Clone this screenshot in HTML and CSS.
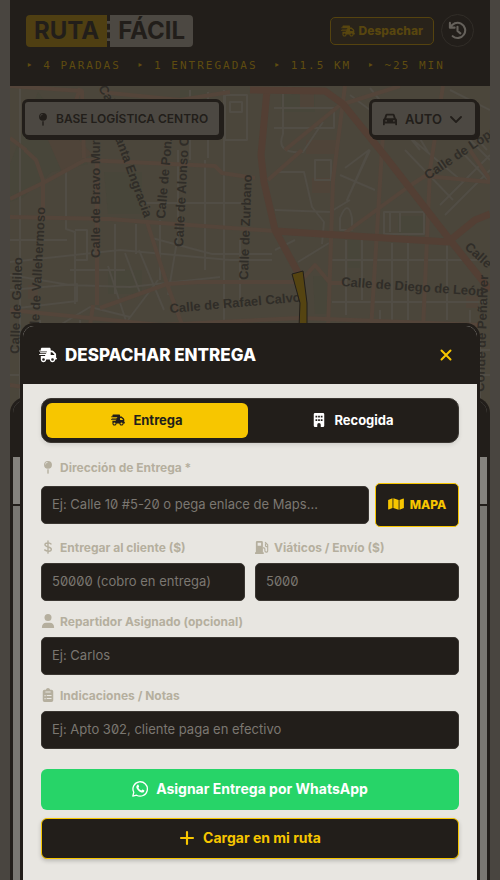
FILE: index.html
```
<!DOCTYPE html>
<html lang="es">
<head>
    <meta charset="UTF-8">
    <meta name="viewport" content="width=device-width, initial-scale=1.0">
    <title>Ruta Fácil</title>
    <link rel="stylesheet" href="styles.css">
</head>
<body>
    <!-- Shared icons -->
    <svg class="sprite" aria-hidden="true">
        <symbol id="i-truck" viewBox="0 0 640 512"><path fill-rule="evenodd" d="M112 0C85.5 0 64 21.5 64 48V96H16c-8.8 0-16 7.2-16 16s7.2 16 16 16H64 272c8.8 0 16 7.2 16 16s-7.2 16-16 16H48c-8.8 0-16 7.2-16 16s7.2 16 16 16H240c8.8 0 16 7.2 16 16s-7.2 16-16 16H16c-8.8 0-16 7.2-16 16s7.2 16 16 16H208c8.8 0 16 7.2 16 16s-7.2 16-16 16H64V416c0 53 43 96 96 96s96-43 96-96H384c0 53 43 96 96 96s96-43 96-96h32c17.700 0 32-14.300 32-32s-14.300-32-32-32V237.300c0-17-6.700-33.300-18.700-45.300L512 114.700c-12-12-28.300-18.700-45.300-18.700H416V48c0-26.500-21.500-48-48-48H112zM544 237.300V256H416V160h50.700L544 237.300zM160 368a48 48 0 1 1 0 96 48 48 0 1 1 0-96zm272 48a48 48 0 1 1 96 0 48 48 0 1 1 -96 0z"/></symbol>
        <symbol id="i-pin" viewBox="0 0 16 16"><path fill-rule="evenodd" d="M8 1a4.500 4.500 0 1 0 0 9a4.500 4.500 0 0 0 0-9zM7.500 3a2 2 0 0 0-2 2H4.800A2.700 2.700 0 0 1 7.500 2.300z"/><path d="M7.200 10.500h1.600V15L8 16l-.8-1z"/></symbol>
        <symbol id="i-building" viewBox="0 0 16 16"><path fill-rule="evenodd" d="M3.500 0h9A1.500 1.500 0 0 1 14 1.500v13a1.500 1.500 0 0 1-1.500 1.500H10v-2.500a2 2 0 0 0-4 0V16H3.500A1.500 1.500 0 0 1 2 14.500v-13A1.500 1.500 0 0 1 3.500 0zM4 3v2h2V3zm3 0v2h2V3zm3 0v2h2V3zM4 7v2h2V7zm3 0v2h2V7zm3 0v2h2V7z"/></symbol>
        <symbol id="i-map" viewBox="0 0 18 16"><path d="M0 3.500 5 1.500v11L.7 14.300Q0 14.500 0 13.800zM6 1.500l6 2v11l-6-2zM13 3.500l4.300-1.800Q18 1.500 18 2.200v10.300l-5 2z"/></symbol>
        <symbol id="i-dollar" viewBox="0 0 16 16"><path fill="none" stroke="currentColor" stroke-width="1.600" stroke-linecap="round" d="M8 1v14M11.500 4.500C9.500 2.900 4.500 2.700 4.500 5.500S11.800 7.600 11.800 10.500 6.500 13.400 4.200 11.300"/></symbol>
        <symbol id="i-fuel" viewBox="0 0 16 16"><path fill-rule="evenodd" d="M2.500 1h5A1.500 1.500 0 0 1 9 2.500V14h1v2H0v-2h1V2.500A1.500 1.500 0 0 1 2.500 1zM3 3v3.500h4V3z"/><path fill="none" stroke="currentColor" stroke-width="1.300" d="M9 9h1q1.300 0 1.300 1.300v2a1.500 1.500 0 0 0 3.200 0V5.500L11.500 2.500M12 4v2.500q0 1 1 1h1.500"/></symbol>
        <symbol id="i-user" viewBox="0 0 16 16"><circle cx="8" cy="4" r="4"/><path d="M1 15.500c0-3.500 2-5.500 5-5.500h4c3 0 5 2 5 5.500q0 .5-.5.500h-13Q1 16 1 15.500z"/></symbol>
        <symbol id="i-notes" viewBox="0 0 16 16"><path fill-rule="evenodd" d="M5.500 2a2.600 2.600 0 0 1 5 0h1.500a2 2 0 0 1 2 2v10a2 2 0 0 1-2 2H4a2 2 0 0 1-2-2V4a2 2 0 0 1 2-2zM5 4v1h6V4zM4 8v1.300h1.300V8zm2.500 0v1.200H12V8zM4 11.500v1.300h1.300v-1.300zm2.500 0v1.200H12v-1.200z"/></symbol>
        <symbol id="i-car" viewBox="0 0 16 16"><path fill-rule="evenodd" d="M4.500 2h7q1.400 0 1.900 1.400L14.600 7Q16 7.500 16 9v5.500q0 .5-.5.500h-1q-.5 0-.5-.5V13H2v1.500q0 .5-.5.500h-1q-.5 0-.5-.5V9Q0 7.500 1.400 7l1.200-3.600Q3.100 2 4.500 2zm.2 2L3.700 7h8.600l-1-3zM3.500 9a1 1 0 1 0 0 2 1 1 0 0 0 0-2zm9 0a1 1 0 1 0 0 2 1 1 0 0 0 0-2z"/></symbol>
        <symbol id="i-history" viewBox="0 0 20 20"><path fill="none" stroke="currentColor" stroke-width="2.200" stroke-linecap="round" stroke-linejoin="round" d="M2 2v5h5M2.600 7A8 8 0 1 1 5 16M10 6v4.500l3 2.500"/></symbol>
        <symbol id="i-chevron" viewBox="0 0 12 12"><path fill="none" stroke="currentColor" stroke-width="1.800" stroke-linecap="round" stroke-linejoin="round" d="M1 4l5 5 5-5"/></symbol>
        <symbol id="i-close" viewBox="0 0 12 12"><path fill="none" stroke="currentColor" stroke-width="2" stroke-linecap="round" d="M1.500 1.500l9 9M10.500 1.500l-9 9"/></symbol>
        <symbol id="i-plus" viewBox="0 0 12 12"><path fill="none" stroke="currentColor" stroke-width="1.600" stroke-linecap="round" d="M6 1.500v9M1.500 6h9"/></symbol>
        <symbol id="i-whatsapp" viewBox="0 0 16 16"><path fill="none" stroke="currentColor" stroke-width="1.300" stroke-linejoin="round" d="M.8 15.200l1-3.900A7.200 7.200 0 1 1 4.600 14.200z"/><path d="M5.300 3.900c.5-.5 1-.4 1.200.1l.6 1.500c.1.400-.6 1-.7 1.200.7 1.400 1.600 2.200 3 2.800.3-.1.800-1.100 1.200-.9l1.500.7c.5.300.2 1.300-.2 1.700-1 .9-2.300.7-3.700 0C6.500 10.100 5.300 8.700 4.600 7.200 4.100 6 4.300 4.700 5.300 3.900z"/></symbol>
    </svg>

    <div class="app">
        <header class="topbar">
            <div class="topbar-row">
                <h1 class="brand"><span class="brand-a">RUTA</span><span class="brand-b">FÁCIL</span></h1>
                <div class="topbar-actions">
                    <button type="button" class="btn-dispatch"><svg class="icon"><use href="#i-truck"/></svg>Despachar</button>
                    <button type="button" class="btn-history" aria-label="Historial"><svg class="icon"><use href="#i-history"/></svg></button>
                </div>
            </div>
            <div class="stats">
                <span>‣ 4 PARADAS</span><span>‣ 1 ENTREGADAS</span><span>‣ 11.5 KM</span><span>‣ ~25 MIN</span>
            </div>
        </header>

        <main class="map-area">
            <svg class="map" viewBox="10 86 480 340" preserveAspectRatio="xMidYMin slice" aria-hidden="true">
                <g class="park">
                    <path d="M38 92l22 30 28 42-36 8-30 26-12 4v-38zM104 172h38v42h-34zM180 90h28v22h-28zM281 94h34v18h-34zM108 270h34v24h-34zM313 276h15v38h-13zM398 216h26v18h-26zM348 238h12v30h-12z"/>
                </g>
                <g class="block">
                    <path d="M48 140l24-8 20 22-30 18zM300 94h14v15h-14zM312 178h18v15h-18zM28 285h10v14h-10zM306 140h32v14h-32zM466 296h12v12h-12z"/>
                </g>
                <g class="minor">
                    <path d="M20 86v335M66 172v57l9 3v72M115 224v70M136 224v30M160 220v60M178 150v85l-10 60M205 160v110M224 90v330M240 240v60M10 240h57M10 262l110-12 110 10h42M10 275l60 10 60 2 90-10M10 290l67-6 0 17-67 8M145 203h100M152 238l60 16h60M108 266l18 55M125 253l15 40M139 250l25 60M158 280l-30 40M75 230h12v30h-12M70 270h55M60 325l30-18 40 10M190 90v70M208 92v66M225 95h22v45h-22zM230 102h12v10h-12z"/>
                    <path d="M274 108h60v20h-60M283 94v40q-8 20 20 18l20-30M276 172h28l8 35 12 15-2 22M275 210l55 2 20-12M315 160h16v20h-16zM345 168l24-18-22 50 23-50M340 175l35 15M384 212h40v22h-40zM390 212v20M400 212v20M346 240v75M362 240v60M392 243v80M408 240v80M447 244v76M330 260h155M332 302h155M405 150l48 50M413 140l50 42M440 205l50-50M445 215l45-45M460 150l28 30M470 140l20 20M398 102l30 50M350 95l40 30M370 88l50 62M450 90l40 20M442 100l45 50M275 250l20-10M298 262l31-19M340 218q8-20 12 0v12h-12z"/>
                    <path d="M10 350h480M10 375h480M40 320v100M80 320v100M120 320v30M380 310v20M456 330v100M470 310v100M480 340v80"/>
                </g>
                <g class="road">
                    <path d="M10 217L110 219 147 222 275 231M10 199L45 182 85 160 215 166 222 173 255 178M25 150L36 160 43 180V216M97 158V305M100 308L167 284 200 282H300L315 265 330 283H345M147 222L167 284 184 330M93 305L88 340M10 138L26 150M10 86L82 91 84 158M80 88L70 120M100 92L180 100 230 92M345 86L333 180 328 330M385 100L371 330M443 86L430 170 423 330M10 310L160 325 300 318 480 325M268 180L302 150M285 150L340 105 400 86M345 233L408 187 425 176 490 182M470 150L490 180M10 385L30 388"/>
                </g>
                <g class="major">
                    <path d="M250 90L325 91 343 104 385 156 450 240 490 290M267 90L261 155 264 182 275 230 302 280M275 231L448 242 475 220 490 214"/>
                </g>
                <g class="street">
                    <text transform="translate(100 258) rotate(-90)">Calle de Bravo Murillo</text>
                    <text transform="translate(98 88) rotate(60)">Calle</text>
                    <text transform="translate(112 130) rotate(70)">Santa Engracia</text>
                    <text transform="translate(165 219) rotate(-85)">Calle de Ponzano</text>
                    <text transform="translate(183 247) rotate(-87)">Calle de Alonso Cano</text>
                    <text transform="translate(248 280) rotate(-88)">Calle de Zurbano</text>
                    <text transform="translate(38 345) rotate(-87)">Calle de Vallehermoso</text>
                    <text transform="translate(19 354) rotate(-88)">Calle de Galileo</text>
                    <text transform="translate(170 313) rotate(-5)">Calle de Rafael Calvo</text>
                    <text transform="translate(341 286) rotate(4)">Calle de Diego de León</text>
                    <text transform="translate(428 180) rotate(-34)">Calle de López</text>
                    <text transform="translate(464 248) rotate(42)">Calle</text>
                    <text transform="translate(484 392) rotate(-88)">Conde de Peñalver</text>
                </g>
                <path class="route" d="M292 274l11-3 4 32 0 50h-9l2-50z"/>
            </svg>
            <div class="map-controls">
                <button type="button" class="chip"><svg class="icon"><use href="#i-pin"/></svg>BASE LOGÍSTICA CENTRO</button>
                <div class="chip chip-mode">
                    <svg class="icon"><use href="#i-car"/></svg>
                    <select aria-label="Vehículo">
                        <option>AUTO</option>
                    </select>
                    <svg class="icon chip-arrow"><use href="#i-chevron"/></svg>
                </div>
            </div>
            <section class="sheet">
                <div class="sheet-head"></div>
                <div class="sheet-row"></div>
            </section>
        </main>
    </div>

    <div class="overlay">
        <div class="modal" role="dialog" aria-labelledby="modalTitle">
            <div class="modal-head">
                <h2 id="modalTitle"><svg class="icon"><use href="#i-truck"/></svg>DESPACHAR ENTREGA</h2>
                <button type="button" class="btn-close" aria-label="Cerrar"><svg class="icon"><use href="#i-close"/></svg></button>
            </div>
            <form class="modal-body">
                <div class="tabs">
                    <button type="button" class="tab active"><svg class="icon"><use href="#i-truck"/></svg>Entrega</button>
                    <button type="button" class="tab"><svg class="icon"><use href="#i-building"/></svg>Recogida</button>
                </div>
                <div class="field">
                    <label for="direccion"><svg class="icon"><use href="#i-pin"/></svg>Dirección de Entrega *</label>
                    <div class="address">
                        <input type="text" id="direccion" placeholder="Ej: Calle 10 #5-20 o pega enlace de Maps...">
                        <button type="button" class="btn-map"><svg class="icon"><use href="#i-map"/></svg>MAPA</button>
                    </div>
                </div>
                <div class="two-cols">
                    <div class="field">
                        <label for="cobro"><svg class="icon"><use href="#i-dollar"/></svg>Entregar al cliente ($)</label>
                        <input type="text" id="cobro" placeholder="50000 (cobro en entrega)">
                    </div>
                    <div class="field">
                        <label for="envio"><svg class="icon"><use href="#i-fuel"/></svg>Viáticos / Envío ($)</label>
                        <input type="text" id="envio" placeholder="5000">
                    </div>
                </div>
                <div class="field">
                    <label for="repartidor"><svg class="icon"><use href="#i-user"/></svg>Repartidor Asignado (opcional)</label>
                    <input type="text" id="repartidor" placeholder="Ej: Carlos">
                </div>
                <div class="field">
                    <label for="notas"><svg class="icon"><use href="#i-notes"/></svg>Indicaciones / Notas</label>
                    <input type="text" id="notas" placeholder="Ej: Apto 302, cliente paga en efectivo">
                </div>
                <div class="actions">
                    <button type="button" class="btn btn-whatsapp"><svg class="icon"><use href="#i-whatsapp"/></svg>Asignar Entrega por WhatsApp</button>
                    <button type="button" class="btn btn-load"><svg class="icon"><use href="#i-plus"/></svg>Cargar en mi ruta</button>
                </div>
            </form>
        </div>
    </div>
</body>
</html>
```
FILE: styles.css
```
:root {
    --dark: #221e1a;
    --yellow: #f7c600;
    --dim-yellow: #4f3f12;
    --dim-paper: #4c4842;
    --paper: #e8e6e1;
    --label: #b5af9e;
}
* {
    box-sizing: border-box;
}
body {
    margin: 0;
    background: #494540;
    color: var(--dark);
    font-family: Inter, "Liberation Sans", sans-serif;
    overflow: hidden;
}
button, input, select {
    font-family: inherit;
    margin: 0;
}
button {
    cursor: pointer;
}
.sprite {
    display: none;
}
.icon {
    width: 14px;
    height: 14px;
    flex: none;
    fill: currentColor;
}
.app {
    max-width: 480px;
    height: 100vh;
    margin: 0 auto;
    display: flex;
    flex-direction: column;
}

/* Header */
.topbar {
    background: var(--dark);
    padding: 14px 16px 13px;
    display: flex;
    flex-direction: column;
    gap: 11px;
}
.topbar-row, .topbar-actions {
    display: flex;
    align-items: center;
}
.topbar-row {
    justify-content: space-between;
}
.topbar-actions {
    gap: 7px;
}
.brand {
    display: flex;
    margin: 0;
    font-size: 24px;
    line-height: 32px;
    font-weight: 700;
    border-radius: 4px;
    overflow: hidden;
}
.brand span {
    padding: 0 8px;
}
.brand-a {
    background: var(--dim-yellow);
}
.brand-b {
    background: var(--dim-paper);
    border-left: 3px dashed var(--dark);
}
.btn-dispatch {
    display: flex;
    align-items: center;
    gap: 4px;
    height: 28px;
    padding: 0 10px;
    background: #29231a;
    border: 1px solid #55430f;
    border-radius: 5px;
    color: #58460f;
    font-size: 12px;
    font-weight: 800;
}
.btn-history {
    display: flex;
    align-items: center;
    justify-content: center;
    width: 33px;
    height: 33px;
    padding: 0;
    background: transparent;
    border: 1px solid #312d28;
    border-radius: 50%;
    color: #65615b;
}
.btn-history .icon {
    width: 19px;
    height: 19px;
}
.stats {
    display: flex;
    gap: 16px;
    font-family: "DejaVu Sans Mono", monospace;
    font-size: 11px;
    line-height: 15px;
    letter-spacing: 2px;
    color: #5f4c10;
    white-space: nowrap;
}

/* Map */
.map-area {
    position: relative;
    flex: 1;
    background: #4b463b;
    overflow: hidden;
}
.map {
    display: block;
    width: 100%;
}
.park {
    fill: #48463a;
}
.block {
    fill: #4f4439;
}
.minor, .road, .major {
    fill: none;
    stroke-linejoin: round;
}
.minor {
    stroke: #514d45;
    stroke-width: 2;
}
.road {
    stroke: #54453a;
    stroke-width: 4;
}
.major {
    stroke: #533f34;
    stroke-width: 7;
}
.street {
    font-family: "Liberation Sans", Arial, sans-serif;
    font-size: 13px;
    font-weight: 700;
    fill: #302d28;
}
.route {
    fill: #554411;
    stroke: var(--dark);
}
.map-controls {
    position: absolute;
    top: 13px;
    left: 12px;
    right: 12px;
    display: flex;
    align-items: flex-start;
    justify-content: space-between;
}
.chip {
    display: flex;
    align-items: center;
    gap: 6px;
    height: 39px;
    padding: 0 11px;
    background: var(--dim-paper);
    border: 3px solid var(--dark);
    border-radius: 6px;
    box-shadow: 2px 2px 0 var(--dark);
    color: var(--dark);
    font-size: 12px;
    font-weight: 600;
}
.chip select {
    appearance: none;
    border: none;
    padding: 0;
    background: transparent;
    color: inherit;
    font-size: 13px;
    font-weight: 600;
}
.chip-mode {
    gap: 8px;
    padding-right: 13px;
}
.chip-arrow {
    width: 12px;
    height: 12px;
}

/* Stops sheet */
.sheet {
    position: absolute;
    top: 311px;
    bottom: 0;
    left: 0;
    right: 0;
    background: #797772;
    border: 3px solid var(--dark);
    border-bottom: none;
    border-radius: 16px 16px 0 0;
    overflow: hidden;
}
.sheet-head {
    height: 57px;
    background: var(--dark);
}
.sheet-row {
    height: 49px;
    background: #85837e;
    border-bottom: 2px solid var(--dark);
}

/* Modal */
.overlay {
    position: fixed;
    inset: 0;
    display: flex;
    align-items: flex-end;
    justify-content: center;
    padding: 0 20px;
}
.modal {
    width: 100%;
    max-width: 460px;
    background: var(--paper);
    border: 3px solid var(--dark);
    border-bottom: none;
    border-radius: 14px 14px 0 0;
    overflow: hidden;
}
.modal-head {
    display: flex;
    align-items: center;
    justify-content: space-between;
    height: 58px;
    padding: 0 16px;
    background: var(--dark);
    color: #fff;
}
.modal-head h2 {
    display: flex;
    align-items: center;
    gap: 8px;
    margin: 0;
    font-size: 17px;
    font-weight: 800;
}
.modal-head h2 .icon {
    width: 18px;
    height: 18px;
}
.btn-close {
    display: flex;
    align-items: center;
    justify-content: center;
    width: 30px;
    height: 30px;
    padding: 0;
    background: transparent;
    border: none;
    color: var(--yellow);
}
.btn-close .icon {
    width: 12px;
    height: 12px;
}
.modal-body {
    display: flex;
    flex-direction: column;
    gap: 10px;
    padding: 14px 18px 21px;
}
.tabs {
    display: flex;
    gap: 4px;
    height: 45px;
    padding: 4px;
    margin-bottom: 4px;
    background: var(--dark);
    border: 1px solid #3a3631;
    border-radius: 10px;
    box-shadow: 0 2px 4px rgba(0, 0, 0, 0.1);
}
.tab {
    flex: 1;
    display: flex;
    align-items: center;
    justify-content: center;
    gap: 8px;
    padding: 0 0 2px;
    background: transparent;
    border: none;
    border-radius: 6px;
    color: #fff;
    font-size: 13px;
    font-weight: 700;
}
.tab.active {
    background: var(--yellow);
    color: var(--dark);
}
.field {
    display: flex;
    flex-direction: column;
    gap: 6px;
}
.field label {
    display: flex;
    align-items: center;
    gap: 5px;
    height: 20px;
    color: var(--label);
    font-size: 12px;
    font-weight: 700;
    white-space: nowrap;
}
.field input {
    width: 100%;
    min-width: 0;
    height: 38px;
    padding: 0 10px 2px;
    background: var(--dark);
    border: 1px solid #3a3631;
    border-radius: 5px;
    color: #fff;
    font-size: 13px;
    font-feature-settings: "zero";
}
.field input::placeholder {
    color: #7b7771;
}
.address {
    display: flex;
    align-items: center;
    gap: 6px;
}
.address input {
    flex: 1;
}
.btn-map {
    display: flex;
    align-items: center;
    justify-content: center;
    gap: 6px;
    width: 84px;
    height: 44px;
    padding: 0 0 2px;
    background: var(--dark);
    border: 1px solid var(--yellow);
    border-radius: 5px;
    color: var(--yellow);
    font-size: 12px;
    font-weight: 800;
}
.btn-map .icon {
    width: 16px;
}
.two-cols {
    display: grid;
    grid-template-columns: 1fr 1fr;
    gap: 10px;
}
.actions {
    display: flex;
    flex-direction: column;
    gap: 8px;
    margin-top: 10px;
}
.btn {
    display: flex;
    align-items: center;
    justify-content: center;
    gap: 8px;
    height: 41px;
    padding: 0 0 2px;
    border: none;
    border-radius: 6px;
    font-size: 14px;
    font-weight: 700;
}
.btn .icon {
    width: 16px;
    height: 16px;
}
.btn-whatsapp {
    background: #27d468;
    color: #fff;
}
.btn-load {
    background: var(--dark);
    border: 1px solid var(--yellow);
    box-shadow: 0 2px 4px rgba(0, 0, 0, 0.2);
    color: var(--yellow);
}
```
